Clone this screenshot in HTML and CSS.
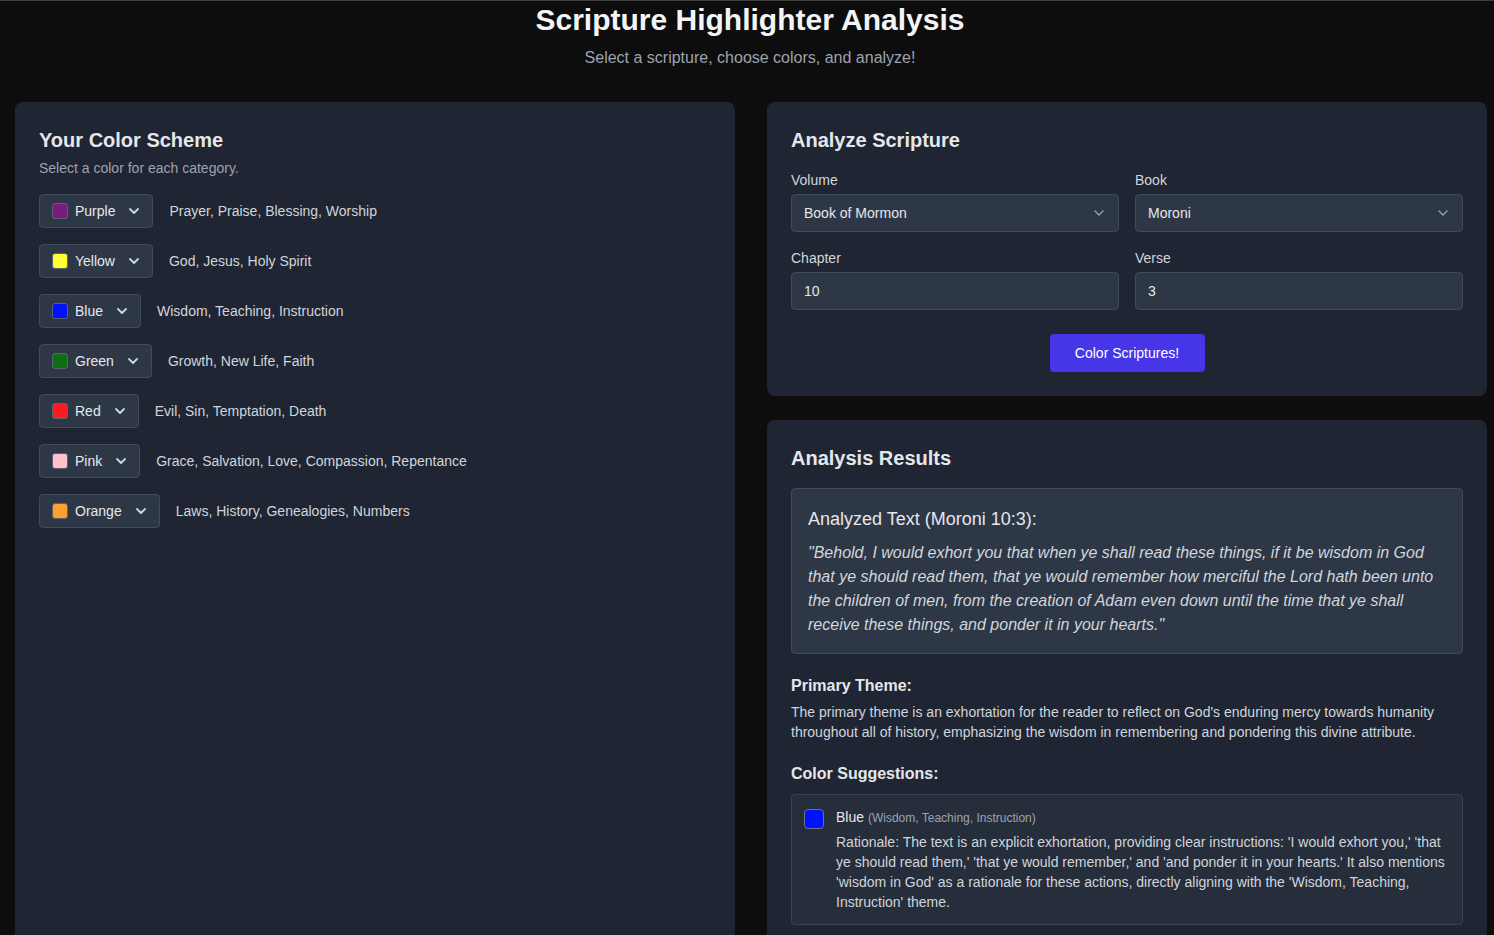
FILE: index.html
```html
<!DOCTYPE html>
<html lang="en">
<head>
<meta charset="utf-8">
<title>Scripture Highlighter Analysis</title>
<link rel="stylesheet" href="styles.css">
</head>
<body>
<header class="page-header">
  <h1 class="page-title">Scripture Highlighter Analysis</h1>
  <p class="page-subtitle">Select a scripture, choose colors, and analyze!</p>
</header>

<main class="layout">
  <section class="card scheme-card">
    <h2 class="card-title">Your Color Scheme</h2>
    <p class="card-hint">Select a color for each category.</p>
    <ul class="scheme-list">
      <li class="scheme-row">
        <button class="color-select"><span class="swatch sw-purple"></span><span class="cs-name">Purple</span><svg class="chev" viewBox="0 0 12 8" width="12" height="8"><path d="M2 2 6 6l4-4"/></svg></button>
        <span class="scheme-label">Prayer, Praise, Blessing, Worship</span>
      </li>
      <li class="scheme-row">
        <button class="color-select"><span class="swatch sw-yellow"></span><span class="cs-name">Yellow</span><svg class="chev" viewBox="0 0 12 8" width="12" height="8"><path d="M2 2 6 6l4-4"/></svg></button>
        <span class="scheme-label">God, Jesus, Holy Spirit</span>
      </li>
      <li class="scheme-row">
        <button class="color-select"><span class="swatch sw-blue"></span><span class="cs-name">Blue</span><svg class="chev" viewBox="0 0 12 8" width="12" height="8"><path d="M2 2 6 6l4-4"/></svg></button>
        <span class="scheme-label">Wisdom, Teaching, Instruction</span>
      </li>
      <li class="scheme-row">
        <button class="color-select"><span class="swatch sw-green"></span><span class="cs-name">Green</span><svg class="chev" viewBox="0 0 12 8" width="12" height="8"><path d="M2 2 6 6l4-4"/></svg></button>
        <span class="scheme-label">Growth, New Life, Faith</span>
      </li>
      <li class="scheme-row">
        <button class="color-select"><span class="swatch sw-red"></span><span class="cs-name">Red</span><svg class="chev" viewBox="0 0 12 8" width="12" height="8"><path d="M2 2 6 6l4-4"/></svg></button>
        <span class="scheme-label">Evil, Sin, Temptation, Death</span>
      </li>
      <li class="scheme-row">
        <button class="color-select"><span class="swatch sw-pink"></span><span class="cs-name">Pink</span><svg class="chev" viewBox="0 0 12 8" width="12" height="8"><path d="M2 2 6 6l4-4"/></svg></button>
        <span class="scheme-label">Grace, Salvation, Love, Compassion, Repentance</span>
      </li>
      <li class="scheme-row">
        <button class="color-select"><span class="swatch sw-orange"></span><span class="cs-name">Orange</span><svg class="chev" viewBox="0 0 12 8" width="12" height="8"><path d="M2 2 6 6l4-4"/></svg></button>
        <span class="scheme-label">Laws, History, Genealogies, Numbers</span>
      </li>
    </ul>
  </section>

  <div class="right-col">
    <section class="card analyze-card">
      <h2 class="card-title">Analyze Scripture</h2>
      <div class="form-grid">
        <div class="field">
          <label class="field-label">Volume</label>
          <div class="field-box select-box"><span>Book of Mormon</span><svg class="chev-sm" viewBox="0 0 10 6" width="10" height="6"><path d="M1 1l4 4 4-4"/></svg></div>
        </div>
        <div class="field">
          <label class="field-label">Book</label>
          <div class="field-box select-box"><span>Moroni</span><svg class="chev-sm" viewBox="0 0 10 6" width="10" height="6"><path d="M1 1l4 4 4-4"/></svg></div>
        </div>
        <div class="field">
          <label class="field-label">Chapter</label>
          <div class="field-box"><span>10</span></div>
        </div>
        <div class="field">
          <label class="field-label">Verse</label>
          <div class="field-box"><span>3</span></div>
        </div>
      </div>
      <div class="actions">
        <button class="primary-btn">Color Scriptures!</button>
      </div>
    </section>

    <section class="card results-card">
      <h2 class="card-title">Analysis Results</h2>
      <div class="quote-box">
        <h3 class="quote-title">Analyzed Text (Moroni 10:3):</h3>
        <p class="quote-text">"Behold, I would exhort you that when ye shall read these things, if it be wisdom in God that ye should read them, that ye would remember how merciful the Lord hath been unto the children of men, from the creation of Adam even down until the time that ye shall receive these things, and ponder it in your hearts."</p>
      </div>

      <h3 class="section-title theme-title">Primary Theme:</h3>
      <p class="section-text">The primary theme is an exhortation for the reader to reflect on God's enduring mercy towards humanity throughout all of history, emphasizing the wisdom in remembering and pondering this divine attribute.</p>

      <h3 class="section-title suggest-title">Color Suggestions:</h3>
      <div class="suggestion">
        <span class="sug-swatch sw-blue"></span>
        <div class="sug-body">
          <p class="sug-head"><span class="sug-name">Blue</span> <span class="sug-cats">(Wisdom, Teaching, Instruction)</span></p>
          <p class="sug-text">Rationale: The text is an explicit exhortation, providing clear instructions: 'I would exhort you,' 'that ye should read them,' 'that ye would remember,' and 'and ponder it in your hearts.' It also mentions 'wisdom in God' as a rationale for these actions, directly aligning with the 'Wisdom, Teaching, Instruction' theme.</p>
        </div>
      </div>
    </section>
  </div>
</main>
</body>
</html>
```

FILE: styles.css
```css
* { box-sizing: border-box; }

html, body { margin: 0; padding: 0; }

body {
  background: #0d0d0d;
  color: #d1d5db;
  font-family: "Liberation Sans", Arial, sans-serif;
  border-top: 1px solid #3d3d3d;
  min-height: 100vh;
}

.page-header {
  text-align: center;
  padding: 1px 0 0 6px;
}

.page-title {
  margin: 0;
  font-size: 30px;
  line-height: 36px;
  font-weight: 700;
  color: #f3f4f6;
}

.page-subtitle {
  margin: 8px 0 0;
  font-size: 16px;
  line-height: 24px;
  color: #9ca3af;
}

.layout {
  display: grid;
  grid-template-columns: 720px 720px;
  column-gap: 32px;
  padding: 32px 7px 0 15px;
}

.card {
  background: #1f2533;
  border-radius: 8px;
  padding: 24px;
}

.card-title {
  margin: 0;
  font-size: 20px;
  line-height: 28px;
  font-weight: 700;
  color: #e5e7eb;
}

.card-hint {
  margin: 4px 0 0;
  font-size: 14px;
  line-height: 20px;
  color: #9ca3af;
}

.scheme-list {
  list-style: none;
  margin: 16px 0 0;
  padding: 0;
  display: flex;
  flex-direction: column;
  gap: 16px;
}

.scheme-row {
  display: flex;
  align-items: center;
  gap: 16px;
}

.color-select {
  display: flex;
  align-items: center;
  height: 34px;
  padding: 0 12px;
  background: #2e3746;
  border: 1px solid #424b5a;
  border-radius: 4px;
  color: #e5e7eb;
  font-family: inherit;
  font-size: 14px;
}

.swatch {
  width: 16px;
  height: 16px;
  border-radius: 3px;
  border: 1px solid #5a6170;
  margin-right: 7px;
  flex: none;
}

.cs-name { line-height: 20px; }

.chev {
  margin-left: 13px;
  fill: none;
  stroke: #d1d5db;
  stroke-width: 1.8;
  stroke-linecap: round;
  stroke-linejoin: round;
}

.scheme-label {
  font-size: 14px;
  line-height: 20px;
  color: #d1d5db;
}

.sw-purple { background: #7a1a7a; }
.sw-yellow { background: #ffff33; }
.sw-blue { background: #0011ff; }
.sw-green { background: #0e6e14; }
.sw-red { background: #ff1a22; }
.sw-pink { background: #ffbfcb; }
.sw-orange { background: #ffa030; }

.right-col {
  display: flex;
  flex-direction: column;
  gap: 24px;
}

.form-grid {
  margin-top: 16px;
  display: grid;
  grid-template-columns: 1fr 1fr;
  column-gap: 16px;
  row-gap: 16px;
}

.field-label {
  display: block;
  font-size: 14px;
  line-height: 20px;
  color: #d1d5db;
  margin-bottom: 4px;
}

.field-box {
  display: flex;
  align-items: center;
  justify-content: space-between;
  height: 38px;
  padding: 0 14px 0 12px;
  background: #2e3746;
  border: 1px solid #424b5a;
  border-radius: 4px;
  font-size: 14px;
  color: #e5e7eb;
}

.chev-sm {
  fill: none;
  stroke: #9ca3af;
  stroke-width: 1.3;
  stroke-linecap: round;
  stroke-linejoin: round;
}

.actions {
  display: flex;
  justify-content: center;
  margin-top: 24px;
}

.primary-btn {
  height: 38px;
  width: 155px;
  background: #4636e8;
  color: #ffffff;
  border: none;
  border-radius: 4px;
  font-family: inherit;
  font-size: 14px;
}

.quote-box {
  margin-top: 16px;
  background: #2e3746;
  border: 1px solid #424b5a;
  border-radius: 4px;
  padding: 16px;
}

.quote-title {
  margin: 0;
  font-size: 18px;
  line-height: 28px;
  font-weight: 400;
  color: #e5e7eb;
}

.quote-text {
  margin: 8px 0 0;
  font-size: 16px;
  line-height: 24px;
  font-style: italic;
  color: #d1d5db;
}

.section-title {
  margin: 0;
  font-size: 16px;
  line-height: 24px;
  font-weight: 700;
  color: #e5e7eb;
}

.theme-title { margin-top: 20px; }
.suggest-title { margin-top: 20px; }

.section-text {
  margin: 4px 0 0;
  font-size: 14px;
  line-height: 20px;
  color: #d1d5db;
}

.suggestion {
  margin-top: 8px;
  display: flex;
  align-items: flex-start;
  gap: 12px;
  background: #262e3c;
  border: 1px solid #3b4352;
  border-radius: 4px;
  padding: 12px;
}

.sug-swatch {
  width: 20px;
  height: 20px;
  border-radius: 4px;
  border: 1px solid #6b7280;
  margin-top: 2px;
  flex: none;
}

.sug-body { flex: 1; }

.sug-head {
  margin: 0;
  font-size: 14px;
  line-height: 20px;
}

.sug-name { color: #e5e7eb; }

.sug-cats {
  font-size: 12px;
  color: #9ca3af;
}

.sug-text {
  margin: 4px 0 0;
  font-size: 14px;
  line-height: 20px;
  color: #d1d5db;
}
```
